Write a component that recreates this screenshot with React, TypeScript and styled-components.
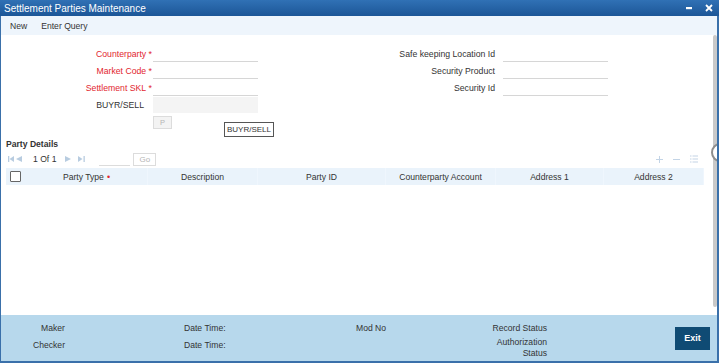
import React from 'react';
import styled, { createGlobalStyle } from 'styled-components';

const GlobalStyle = createGlobalStyle`
  html, body {
    margin: 0;
    padding: 0;
    background: #fff;
  }
  body {
    font-family: "Liberation Sans", Arial, sans-serif;
    color: #333;
  }
`;

const Window = styled.div`
  position: relative;
  width: 719px;
  height: 363px;
  display: flex;
  flex-direction: column;
  overflow: hidden;
`;

const TitleBar = styled.div`
  height: 16px;
  flex: none;
  display: flex;
  align-items: center;
  justify-content: space-between;
  padding-left: 4px;
  background: linear-gradient(#3071b5, #1c5697);
  color: #fff;
  font-size: 10px;
`;

const WindowControls = styled.div`
  display: flex;
  align-items: center;
  gap: 13px;
  padding-right: 6px;
`;

const Frame = styled.div`
  flex: 1;
  min-height: 0;
  display: flex;
  flex-direction: column;
  border-left: 1px solid #3a70aa;
  border-right: 2px solid #3a70aa;
  border-bottom: 2px solid #3a70aa;
`;

const Toolbar = styled.div`
  height: 19px;
  flex: none;
  display: flex;
  align-items: center;
  gap: 14px;
  padding-left: 9px;
  background: #eef5fc;
  font-size: 8.6px;
`;

const Body = styled.div`
  position: relative;
  flex: 1;
  min-height: 0;
  display: flex;
  overflow: hidden;
  background: #fff;
`;

const Content = styled.div`
  flex: 1;
  display: flex;
  flex-direction: column;
  padding-top: 10px;
`;

const FormGrid = styled.div`
  display: grid;
  grid-template-columns: 152px 105px 245px 105px;
  grid-auto-rows: 17px;
`;

const Label = styled.div<{ $pr: number; $required?: boolean }>`
  display: flex;
  align-items: center;
  justify-content: flex-end;
  padding-right: ${p => p.$pr}px;
  font-size: 8.7px;
  white-space: nowrap;
  color: ${p => (p.$required ? '#e2262f' : '#333')};
`;

const Field = styled.div<{ $disabled?: boolean }>`
  height: 16px;
  margin-top: ${p => (p.$disabled ? 1 : 0)}px;
  background: ${p => (p.$disabled ? '#f4f4f4' : '#fff')};
  border-bottom: ${p => (p.$disabled ? 'none' : '1px solid #d6d6d6')};
`;

const ButtonRow = styled.div`
  display: flex;
  padding-left: 152px;
  margin-top: 3px;
`;

const PButton = styled.div`
  width: 17px;
  height: 11px;
  border: 1px solid #dcdcdc;
  background: #f3f3f3;
  color: #b5b5b5;
  font-size: 7.5px;
  display: flex;
  align-items: center;
  justify-content: center;
`;

const Tooltip = styled.div`
  position: absolute;
  left: 223px;
  top: 87px;
  width: 48px;
  height: 13px;
  border: 1px solid #555;
  background: #fff;
  font-size: 8px;
  color: #333;
  display: flex;
  align-items: center;
  justify-content: center;
`;

const SectionTitle = styled.div`
  margin-top: 9px;
  padding-left: 5px;
  height: 12px;
  line-height: 12px;
  font-size: 8.6px;
  font-weight: bold;
  color: #333;
`;

const Pager = styled.div`
  margin-top: 2px;
  height: 14px;
  display: flex;
  align-items: center;
  padding-left: 6px;
  padding-right: 14px;
  font-size: 8.6px;
`;

const PagerItem = styled.div<{ $ml: number }>`
  margin-left: ${p => p.$ml}px;
  display: flex;
  align-items: center;
`;

const PageInput = styled.div`
  margin-left: 14px;
  width: 31px;
  height: 13px;
  border-bottom: 1px solid #dcdcdc;
`;

const GoButton = styled.div`
  margin-left: 3px;
  width: 21px;
  height: 11px;
  border: 1px solid #dcdcdc;
  color: #b5b5b5;
  font-size: 8px;
  display: flex;
  align-items: center;
  justify-content: center;
`;

const GridTools = styled.div`
  margin-left: auto;
  display: flex;
  align-items: center;
  gap: 10px;
`;

const HeaderRow = styled.div`
  margin: 2px 8px 0 5px;
  height: 17px;
  display: grid;
  grid-template-columns: 20px 122px 110px 128px 110px 108px 100px;
  background: #eaf3fb;
`;

const HeaderCell = styled.div`
  display: flex;
  align-items: center;
  justify-content: center;
  font-size: 8.6px;
  color: #333;
  border-right: 1px solid #eff6fd;
  white-space: nowrap;
`;

const CheckCell = styled.div`
  display: flex;
  align-items: center;
  padding-left: 4px;
`;

const Checkbox = styled.div`
  width: 9px;
  height: 9px;
  border: 1px solid #666;
  border-radius: 1px;
  background: #fff;
`;

const RequiredDot = styled.span`
  color: #e2262f;
  margin-left: 3px;
  font-size: 9px;
`;

const ScrollGutter = styled.div`
  width: 6px;
  flex: none;
`;

const ScrollTrack = styled.div`
  margin-left: 1px;
  width: 4px;
  height: 272px;
  border-radius: 2px;
  background: #c9c9c9;
`;

const CollapseHandle = styled.div`
  position: absolute;
  left: 710px;
  top: 108px;
  width: 14px;
  height: 15px;
  border: 2px solid #8e8e8e;
  border-radius: 50%;
  background: #fff;
`;

const Footer = styled.div`
  height: 46px;
  flex: none;
  display: flex;
  background: #b7d8ec;
  font-size: 8.6px;
  color: #333;
`;

const FooterGrid = styled.div`
  margin-top: 5px;
  display: grid;
  grid-template-columns: 64px 119px 172px 84px 107px;
  grid-template-rows: 17px 17px;
`;

const FooterText = styled.div<{ $align?: 'left' | 'right'; $tall?: boolean }>`
  text-align: ${p => p.$align || 'left'};
  line-height: ${p => (p.$tall ? 11 : 17)}px;
  white-space: nowrap;
`;

const ExitButton = styled.div`
  align-self: center;
  margin-left: auto;
  margin-right: 7px;
  width: 35px;
  height: 23px;
  background: #0f4b74;
  color: #fff;
  font-size: 9px;
  font-weight: bold;
  display: flex;
  align-items: center;
  justify-content: center;
`;

const PAGER_COLOR = '#b8cce0';

const FirstIcon = () => (
  <svg width="6" height="6" viewBox="0 0 6 6">
    <rect x="0" y="0" width="1.3" height="6" fill={PAGER_COLOR} />
    <polygon points="6,0 6,6 1.5,3" fill={PAGER_COLOR} />
  </svg>
);

const PrevIcon = () => (
  <svg width="6" height="6" viewBox="0 0 6 6">
    <polygon points="6,0 6,6 0,3" fill={PAGER_COLOR} />
  </svg>
);

const NextIcon = () => (
  <svg width="6" height="6" viewBox="0 0 6 6">
    <polygon points="0,0 0,6 6,3" fill={PAGER_COLOR} />
  </svg>
);

const LastIcon = () => (
  <svg width="7" height="6" viewBox="0 0 7 6">
    <polygon points="0,0 0,6 4.5,3" fill={PAGER_COLOR} />
    <rect x="5.5" y="0" width="1.3" height="6" fill={PAGER_COLOR} />
  </svg>
);

const TOOL_COLOR = '#c3d4e6';

const PlusIcon = () => (
  <svg width="7" height="7" viewBox="0 0 7 7">
    <rect x="3" y="0" width="1" height="7" fill={TOOL_COLOR} />
    <rect x="0" y="3" width="7" height="1" fill={TOOL_COLOR} />
  </svg>
);

const MinusIcon = () => (
  <svg width="7" height="7" viewBox="0 0 7 7">
    <rect x="0" y="3" width="7" height="1" fill={TOOL_COLOR} />
  </svg>
);

const ListIcon = () => (
  <svg width="8" height="8" viewBox="0 0 8 8">
    {[0.5, 3.5, 6.5].map(y => (
      <g key={y}>
        <rect x="0" y={y} width="1.5" height="1" fill={TOOL_COLOR} />
        <rect x="2.5" y={y} width="5.5" height="1" fill={TOOL_COLOR} />
      </g>
    ))}
  </svg>
);

const formRows = [
  { left: 'Counterparty', required: true, right: 'Safe keeping Location Id' },
  { left: 'Market Code', required: true, right: 'Security Product' },
  { left: 'Settlement SKL', required: true, right: 'Security Id' },
];

const columns = ['Description', 'Party ID', 'Counterparty Account', 'Address 1', 'Address 2'];

export default function App() {
  return (
    <Window>
      <GlobalStyle />
      <TitleBar>
        <span>Settlement Parties Maintenance</span>
        <WindowControls>
          <svg width="6" height="3" viewBox="0 0 6 3">
            <rect x="0" y="0" width="6" height="2.2" fill="#fff" />
          </svg>
          <svg width="8" height="8" viewBox="0 0 8 8">
            <path d="M1 1 L7 7 M7 1 L1 7" stroke="#fff" strokeWidth="1.8" />
          </svg>
        </WindowControls>
      </TitleBar>
      <Frame>
        <Toolbar>
          <span>New</span>
          <span>Enter Query</span>
        </Toolbar>
        <Body>
          <Content>
            <FormGrid>
              {formRows.map(r => (
                <React.Fragment key={r.left}>
                  <Label $pr={1} $required={r.required}>
                    {r.left}&nbsp;*
                  </Label>
                  <Field />
                  <Label $pr={8}>{r.right}</Label>
                  <Field />
                </React.Fragment>
              ))}
              <Label $pr={9}>BUYR/SELL</Label>
              <Field $disabled />
            </FormGrid>
            <ButtonRow>
              <PButton>P</PButton>
            </ButtonRow>
            <SectionTitle>Party Details</SectionTitle>
            <Pager>
              <PagerItem $ml={1}><FirstIcon /></PagerItem>
              <PagerItem $ml={2}><PrevIcon /></PagerItem>
              <PagerItem $ml={11}>1 Of 1</PagerItem>
              <PagerItem $ml={9}><NextIcon /></PagerItem>
              <PagerItem $ml={7}><LastIcon /></PagerItem>
              <PageInput />
              <GoButton>Go</GoButton>
              <GridTools>
                <PlusIcon />
                <MinusIcon />
                <ListIcon />
              </GridTools>
            </Pager>
            <HeaderRow>
              <CheckCell>
                <Checkbox />
              </CheckCell>
              <HeaderCell>
                Party Type<RequiredDot>•</RequiredDot>
              </HeaderCell>
              {columns.map(c => (
                <HeaderCell key={c}>{c}</HeaderCell>
              ))}
            </HeaderRow>
          </Content>
          <ScrollGutter>
            <ScrollTrack />
          </ScrollGutter>
          <Tooltip>BUYR/SELL</Tooltip>
          <CollapseHandle />
        </Body>
        <Footer>
          <FooterGrid>
            <FooterText $align="right">Maker</FooterText>
            <div />
            <FooterText>Date Time:</FooterText>
            <FooterText>Mod No</FooterText>
            <FooterText $align="right">Record Status</FooterText>
            <FooterText $align="right">Checker</FooterText>
            <div />
            <FooterText>Date Time:</FooterText>
            <div />
            <FooterText $align="right" $tall>
              Authorization
              <br />
              Status
            </FooterText>
          </FooterGrid>
          <ExitButton>Exit</ExitButton>
        </Footer>
      </Frame>
    </Window>
  );
}
